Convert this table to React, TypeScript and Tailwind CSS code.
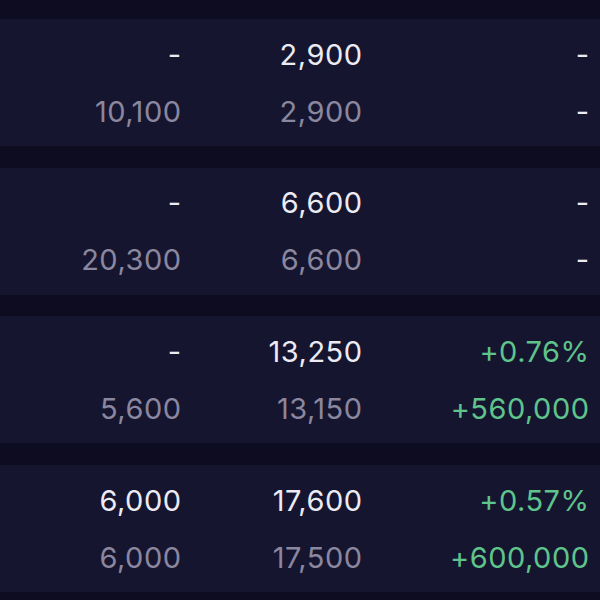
import React from "react";

type Cell = { text: string; tone: "white" | "gray" | "green" };
type Group = { top: Cell[]; bottom: Cell[] };

const groups: Group[] = [
  {
    top: [
      { text: "-", tone: "white" },
      { text: "2,900", tone: "white" },
      { text: "-", tone: "white" },
    ],
    bottom: [
      { text: "10,100", tone: "gray" },
      { text: "2,900", tone: "gray" },
      { text: "-", tone: "white" },
    ],
  },
  {
    top: [
      { text: "-", tone: "white" },
      { text: "6,600", tone: "white" },
      { text: "-", tone: "white" },
    ],
    bottom: [
      { text: "20,300", tone: "gray" },
      { text: "6,600", tone: "gray" },
      { text: "-", tone: "white" },
    ],
  },
  {
    top: [
      { text: "-", tone: "white" },
      { text: "13,250", tone: "white" },
      { text: "+0.76%", tone: "green" },
    ],
    bottom: [
      { text: "5,600", tone: "gray" },
      { text: "13,150", tone: "gray" },
      { text: "+560,000", tone: "green" },
    ],
  },
  {
    top: [
      { text: "6,000", tone: "white" },
      { text: "17,600", tone: "white" },
      { text: "+0.57%", tone: "green" },
    ],
    bottom: [
      { text: "6,000", tone: "gray" },
      { text: "17,500", tone: "gray" },
      { text: "+600,000", tone: "green" },
    ],
  },
];

const toneClass: Record<Cell["tone"], string> = {
  white: "text-[#ecebf3]",
  gray: "text-[#8a879f]",
  green: "text-[#5fc48c]",
};

function Row({ cells }: { cells: Cell[] }) {
  return (
    <div className="grid h-[57px] grid-cols-[181px_181px_1fr] items-center pr-[11px]">
      {cells.map((c, i) => (
        <div key={i} className={`-mr-[0.5px] text-right ${toneClass[c.tone]}`}>
          {c.text}
        </div>
      ))}
    </div>
  );
}

export default function App() {
  return (
    <div
      className="flex h-[600px] w-[600px] flex-col gap-[21.7px] overflow-hidden bg-[#0d0c21] pt-[19px] text-[29px] font-normal leading-none tracking-[0.5px]"
      style={{ fontFamily: "Inter, 'Noto Sans', sans-serif" }}
    >
      {groups.map((g, i) => (
        <div key={i} className="flex h-[127px] shrink-0 flex-col bg-[#16152f] py-[6.5px]">
          <Row cells={g.top} />
          <Row cells={g.bottom} />
        </div>
      ))}
    </div>
  );
}
